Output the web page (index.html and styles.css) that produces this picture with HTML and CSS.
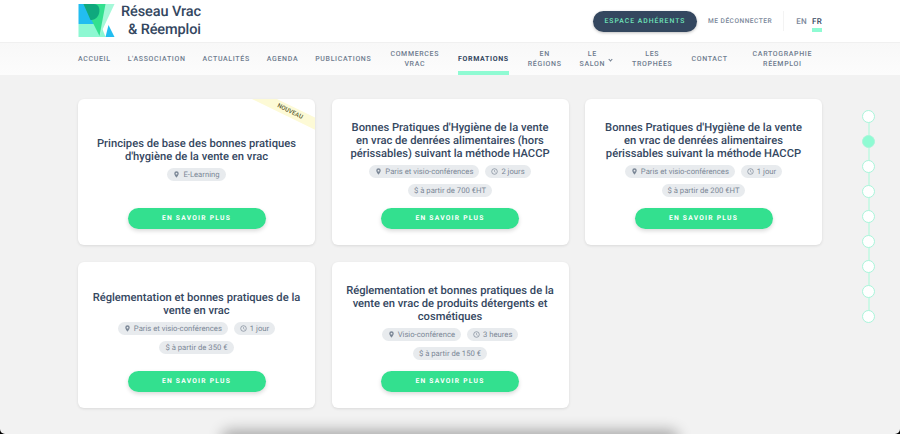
FILE: index.html
```html
<!DOCTYPE html>
<html>
<head>
  <title>Formations - Réseau Vrac &amp; Réemploi</title>
  <link rel="stylesheet" href="styles.css">
</head>
<body>
  <header class="top">
    <a class="logo">
      <svg width="37" height="33" viewBox="0 0 36 33">
        <polygon points="0,0 15,0 22,20 0,20" fill="#22bdf0"/>
        <polygon points="0,20 22,20 27,33 0,33" fill="#8df8d2"/>
        <polygon points="27,33 36,33 30,21" fill="#22bdf0"/>
        <polygon points="18,0 36,0 21,32" fill="#a5f8d8"/>
        <polygon points="5,0 27,0 21,32" fill="#33e08f"/>
        <path d="M5,0 H15 C21,0 22,6 20,11 C18,15 15,16 12,16 Z" fill="#0fa87d"/>
      </svg>
      <span class="logo-text">Réseau Vrac<br>&amp; Réemploi</span>
    </a>
    <div class="top-right">
      <a class="btn-member">ESPACE ADHÉRENTS</a>
      <a class="logout">ME DÉCONNECTER</a>
      <div class="langs">
        <a>EN</a>
        <a class="active">FR</a>
      </div>
    </div>
  </header>

  <nav class="menu">
    <a>ACCUEIL</a>
    <a>L'ASSOCIATION</a>
    <a>ACTUALITÉS</a>
    <a>AGENDA</a>
    <a>PUBLICATIONS</a>
    <a class="two">COMMERCES<br>VRAC</a>
    <a class="current">FORMATIONS</a>
    <a class="two">EN<br>RÉGIONS</a>
    <a class="two drop">LE<br>SALON</a>
    <a class="two">LES<br>TROPHÉES</a>
    <a>CONTACT</a>
    <a class="two last">CARTOGRAPHIE<br>RÉEMPLOI</a>
  </nav>

  <main class="cards">
    <article class="card">
      <span class="ribbon"><b>NOUVEAU</b></span>
      <h3>Principes de base des bonnes pratiques d'hygiène de la vente en vrac</h3>
      <div class="tags">
        <span class="tag"><svg class="ico" viewBox="0 0 10 10"><path d="M5 0.5a3.2 3.2 0 0 0-3.2 3.2C1.8 6 5 9.5 5 9.5S8.2 6 8.2 3.700A3.200 3.200 0 0 0 5 0.500zM5 5a1.200 1.200 0 1 1 0-2.500A1.200 1.200 0 0 1 5 5z" fill="#7b8796"/></svg>E-Learning</span>
      </div>
      <a class="more">EN SAVOIR PLUS</a>
    </article>

    <article class="card">
      <h3>Bonnes Pratiques d'Hygiène de la vente en vrac de denrées alimentaires (hors périssables) suivant la méthode HACCP</h3>
      <div class="tags">
        <span class="tag"><svg class="ico" viewBox="0 0 10 10"><path d="M5 0.5a3.2 3.2 0 0 0-3.2 3.2C1.8 6 5 9.5 5 9.5S8.2 6 8.2 3.700A3.200 3.200 0 0 0 5 0.500zM5 5a1.200 1.200 0 1 1 0-2.500A1.200 1.200 0 0 1 5 5z" fill="#7b8796"/></svg>Paris et visio-conférences</span>
        <span class="tag"><svg class="ico" viewBox="0 0 10 10"><circle cx="5" cy="5" r="4" fill="none" stroke="#7b8796"/><path d="M5 2.800V5.200L6.600 6.200" fill="none" stroke="#7b8796" stroke-width="0.8"/></svg>2 jours</span>
        <span class="tag">$ à partir de 700 €HT</span>
      </div>
      <a class="more">EN SAVOIR PLUS</a>
    </article>

    <article class="card">
      <h3>Bonnes Pratiques d'Hygiène de la vente en vrac de denrées alimentaires périssables suivant la méthode HACCP</h3>
      <div class="tags">
        <span class="tag"><svg class="ico" viewBox="0 0 10 10"><path d="M5 0.5a3.2 3.2 0 0 0-3.2 3.2C1.8 6 5 9.5 5 9.5S8.2 6 8.2 3.700A3.200 3.200 0 0 0 5 0.500zM5 5a1.200 1.200 0 1 1 0-2.500A1.200 1.200 0 0 1 5 5z" fill="#7b8796"/></svg>Paris et visio-conférences</span>
        <span class="tag"><svg class="ico" viewBox="0 0 10 10"><circle cx="5" cy="5" r="4" fill="none" stroke="#7b8796"/><path d="M5 2.800V5.200L6.600 6.200" fill="none" stroke="#7b8796" stroke-width="0.8"/></svg>1 jour</span>
        <span class="tag">$ à partir de 200 €HT</span>
      </div>
      <a class="more">EN SAVOIR PLUS</a>
    </article>

    <article class="card">
      <h3>Réglementation et bonnes pratiques de la vente en vrac</h3>
      <div class="tags">
        <span class="tag"><svg class="ico" viewBox="0 0 10 10"><path d="M5 0.5a3.2 3.2 0 0 0-3.2 3.2C1.8 6 5 9.5 5 9.5S8.2 6 8.2 3.700A3.200 3.200 0 0 0 5 0.500zM5 5a1.200 1.200 0 1 1 0-2.500A1.200 1.200 0 0 1 5 5z" fill="#7b8796"/></svg>Paris et visio-conférences</span>
        <span class="tag"><svg class="ico" viewBox="0 0 10 10"><circle cx="5" cy="5" r="4" fill="none" stroke="#7b8796"/><path d="M5 2.800V5.200L6.600 6.200" fill="none" stroke="#7b8796" stroke-width="0.8"/></svg>1 jour</span>
        <span class="tag">$ à partir de 350 €</span>
      </div>
      <a class="more">EN SAVOIR PLUS</a>
    </article>

    <article class="card">
      <h3>Réglementation et bonnes pratiques de la vente en vrac de produits détergents et cosmétiques</h3>
      <div class="tags">
        <span class="tag"><svg class="ico" viewBox="0 0 10 10"><path d="M5 0.5a3.2 3.2 0 0 0-3.2 3.2C1.8 6 5 9.5 5 9.5S8.2 6 8.2 3.700A3.200 3.200 0 0 0 5 0.500zM5 5a1.200 1.200 0 1 1 0-2.500A1.200 1.200 0 0 1 5 5z" fill="#7b8796"/></svg>Visio-conférence</span>
        <span class="tag"><svg class="ico" viewBox="0 0 10 10"><circle cx="5" cy="5" r="4" fill="none" stroke="#7b8796"/><path d="M5 2.800V5.200L6.600 6.200" fill="none" stroke="#7b8796" stroke-width="0.8"/></svg>3 heures</span>
        <span class="tag">$ à partir de 150 €</span>
      </div>
      <a class="more">EN SAVOIR PLUS</a>
    </article>
  </main>

  <div class="pager">
    <span></span>
    <span class="on"></span>
    <span></span>
    <span></span>
    <span></span>
    <span></span>
    <span></span>
    <span></span>
    <span></span>
  </div>

  <div class="bottom-shadow"></div>
</body>
</html>
```

FILE: styles.css
```css
/* Page */
html {
  background-color: #000;
}

body {
  margin: 0;
  height: 434px;
  overflow: hidden;
  position: relative;
  border-radius: 0 0 5px 5px;
  font-family: Roboto, Arial, sans-serif;
  text-rendering: geometricPrecision;
  background-color: #f2f2f2;
  color: #34475f;
}

/* Header */
.top {
  display: flex;
  justify-content: space-between;
  align-items: center;
  height: 43px;
  padding: 0 78px;
  background-color: #fff;
  box-sizing: border-box;
  border-bottom: 1px solid #f0f0f0;
}

.logo {
  display: flex;
  align-items: center;
  gap: 6px;
  margin-bottom: 1px;
}

.logo-text {
  font-size: 14.5px;
  font-weight: 500;
  line-height: 18px;
  letter-spacing: -0.1px;
  text-align: right;
}

.top-right {
  display: flex;
  align-items: center;
}

.btn-member {
  width: 104px;
  height: 21px;
  line-height: 21px;
  text-align: center;
  border-radius: 11px;
  background-color: #34475f;
  color: #6fe3b9;
  font-size: 6.8px;
  font-weight: 500;
  letter-spacing: 1px;
  box-shadow: 0 1px 3px rgba(0, 0, 0, 0.25);
}

.logout {
  margin-left: 11px;
  font-size: 6.600px;
  font-weight: 500;
  letter-spacing: 0.5px;
  color: #7a8799;
}

.langs {
  display: flex;
  gap: 5px;
  margin-left: 11px;
  padding-left: 12px;
  border-left: 1px solid #f3f3f3;
  height: 20px;
  align-items: center;
  font-size: 8px;
  font-weight: 500;
  letter-spacing: 0.3px;
  color: #7a8799;
}

.langs .active {
  position: relative;
  color: #34475f;
}

.langs .active::after {
  content: "";
  position: absolute;
  left: 0;
  right: 0;
  bottom: -6px;
  height: 4px;
  background-color: #8ffbd3;
}

/* Menu */
.menu {
  display: flex;
  align-items: center;
  gap: 17px;
  height: 32px;
  padding: 0 78px;
  background: linear-gradient(#f8f8f8, #fcfcfc);
  font-size: 7px;
  font-weight: 500;
  letter-spacing: 0.66px;
  line-height: 10.500px;
  text-align: center;
  color: #6e7c8f;
}

.menu a {
  display: block;
  position: relative;
}

.menu .two {
  padding: 0 2px;
}

.menu .current {
  align-self: stretch;
  display: flex;
  align-items: center;
  color: #34475f;
  font-weight: 700;
}

.menu .current::after {
  content: "";
  position: absolute;
  left: 0;
  right: 0;
  bottom: 0;
  height: 4px;
  background-color: #8ffbd3;
}

.menu .drop {
  margin: 0 6px 0 -3px;
}

.menu .drop::after {
  content: "";
  position: absolute;
  right: -5px;
  top: 9px;
  width: 2px;
  height: 2px;
  border-right: 1px solid #6e7c8f;
  border-bottom: 1px solid #6e7c8f;
  transform: rotate(45deg);
}

.menu .last {
  margin-left: 6px;
}

/* Cards */
.cards {
  display: grid;
  grid-template-columns: repeat(3, 237px);
  grid-auto-rows: 146px;
  gap: 17px 16.500px;
  padding: 24px 0 0 78px;
}

.card {
  position: relative;
  overflow: hidden;
  display: flex;
  flex-direction: column;
  align-items: center;
  box-sizing: border-box;
  padding: 11px 14px 16px;
  border-radius: 6px;
  background-color: #fff;
  box-shadow: 0 1px 3px rgba(0, 0, 0, 0.1);
}

.card h3 {
  margin: auto 0 0;
  font-size: 11.200px;
  font-weight: 500;
  line-height: 13px;
  text-align: center;
  color: #34475f;
}

.tags {
  display: flex;
  flex-wrap: wrap;
  justify-content: center;
  gap: 6px;
  margin: 5px 0 auto;
}

.tag {
  display: inline-flex;
  align-items: center;
  gap: 2px;
  height: 13px;
  padding: 0 6px;
  border-radius: 7px;
  background-color: #e8ebee;
  color: #7b8796;
  font-size: 7.700px;
}

.ico {
  width: 7px;
  height: 7px;
  margin-right: 1px;
}

.more {
  display: block;
  width: 138px;
  height: 21px;
  line-height: 21px;
  flex: none;
  border-radius: 11px;
  background-color: #33e08f;
  color: #fff;
  font-size: 6.700px;
  font-weight: 700;
  letter-spacing: 1.250px;
  text-align: center;
  box-shadow: 0 2px 4px rgba(0, 0, 0, 0.15);
}

/* Ribbon */
.ribbon {
  position: absolute;
  top: 7px;
  right: -20px;
  width: 90px;
  height: 11px;
  line-height: 11px;
  text-align: center;
  transform: rotate(26deg);
  background-color: #fdfad6;
  color: #5b5a32;
  font-size: 6px;
}

.ribbon b {
  font-weight: 500;
}

/* Side pager */
.pager {
  position: absolute;
  left: 862px;
  top: 110px;
  display: flex;
  flex-direction: column;
  gap: 12px;
}

.pager::before {
  content: "";
  position: absolute;
  left: 5.500px;
  top: 6px;
  bottom: 6px;
  width: 2px;
  background-color: #cdf7e6;
}

.pager span {
  position: relative;
  width: 13px;
  height: 13px;
  box-sizing: border-box;
  border: 1px solid #a9f5da;
  border-radius: 50%;
  background-color: #fff;
}

.pager .on {
  background-color: #8ffbd3;
}

/* Shadow along the bottom edge */
.bottom-shadow {
  position: absolute;
  left: 225px;
  right: 225px;
  bottom: -10px;
  height: 10px;
  border-radius: 6px;
  box-shadow: 0 0 14px 4px rgba(0, 0, 0, 0.3);
}
```
